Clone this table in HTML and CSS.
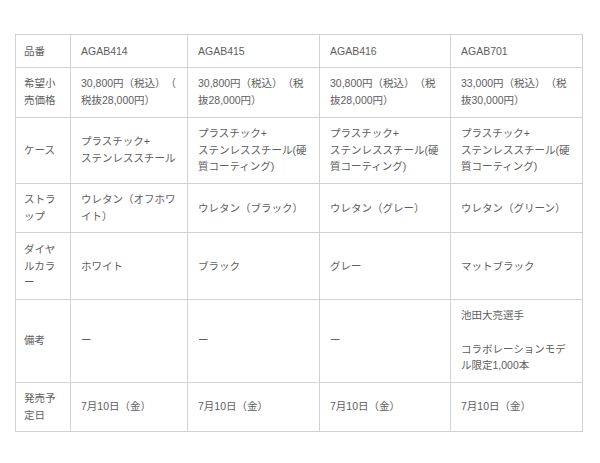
FILE: index.html
```html
<!DOCTYPE html>
<html lang="ja">
<head>
<meta charset="utf-8">
<link rel="stylesheet" href="styles.css">
</head>
<body>
<table class="spec">
  <colgroup>
    <col class="c-head">
    <col class="c-a">
    <col class="c-b">
    <col class="c-c">
    <col class="c-d">
  </colgroup>
  <tbody>
    <tr>
      <th>品番</th>
      <td>AGAB414</td>
      <td>AGAB415</td>
      <td>AGAB416</td>
      <td>AGAB701</td>
    </tr>
    <tr>
      <th>希望小売価格</th>
      <td>30,800円（税込）（税抜28,000円）</td>
      <td>30,800円（税込）（税抜28,000円）</td>
      <td>30,800円（税込）（税抜28,000円）</td>
      <td>33,000円（税込）（税抜30,000円）</td>
    </tr>
    <tr>
      <th>ケース</th>
      <td>プラスチック+<br>ステンレススチール</td>
      <td>プラスチック+<br>ステンレススチール(硬質コーティング)</td>
      <td>プラスチック+<br>ステンレススチール(硬質コーティング)</td>
      <td>プラスチック+<br>ステンレススチール(硬質コーティング)</td>
    </tr>
    <tr>
      <th>ストラップ</th>
      <td>ウレタン（オフホワイト）</td>
      <td>ウレタン（ブラック）</td>
      <td>ウレタン（グレー）</td>
      <td>ウレタン（グリーン）</td>
    </tr>
    <tr>
      <th>ダイヤルカラー</th>
      <td>ホワイト</td>
      <td>ブラック</td>
      <td>グレー</td>
      <td>マットブラック</td>
    </tr>
    <tr>
      <th>備考</th>
      <td>ー</td>
      <td>ー</td>
      <td>ー</td>
      <td>池田大亮選手<br><br>コラボレーションモデル限定1,000本</td>
    </tr>
    <tr>
      <th>発売予定日</th>
      <td>7月10日（金）</td>
      <td>7月10日（金）</td>
      <td>7月10日（金）</td>
      <td>7月10日（金）</td>
    </tr>
  </tbody>
</table>
</body>
</html>
```

FILE: styles.css
```css
html, body {
  margin: 0;
  background: #ffffff;
}

body {
  padding: 34px 0 0 15px;
  font-family: "Liberation Sans", "Noto Sans CJK JP", sans-serif;
  font-size: 10.5px;
  line-height: 16.66px;
  color: #5e5e5e;
  text-spacing-trim: space-all;
}

.spec {
  border-collapse: collapse;
  table-layout: fixed;
  width: 567px;
}

.c-head { width: 55px; }
.c-a { width: 117px; }
.c-b { width: 132px; }
.c-c { width: 131px; }
.c-d { width: 132px; }

.spec th,
.spec td {
  border: 1px solid #d2d2d2;
  padding: 7.5px 9px 7.8px 10px;
  text-align: left;
  vertical-align: middle;
  font-weight: normal;
  word-break: break-all;
  line-break: anywhere;
  text-spacing-trim: space-all;
}

.spec th {
  padding-left: 8px;
  padding-right: 6px;
}
```
